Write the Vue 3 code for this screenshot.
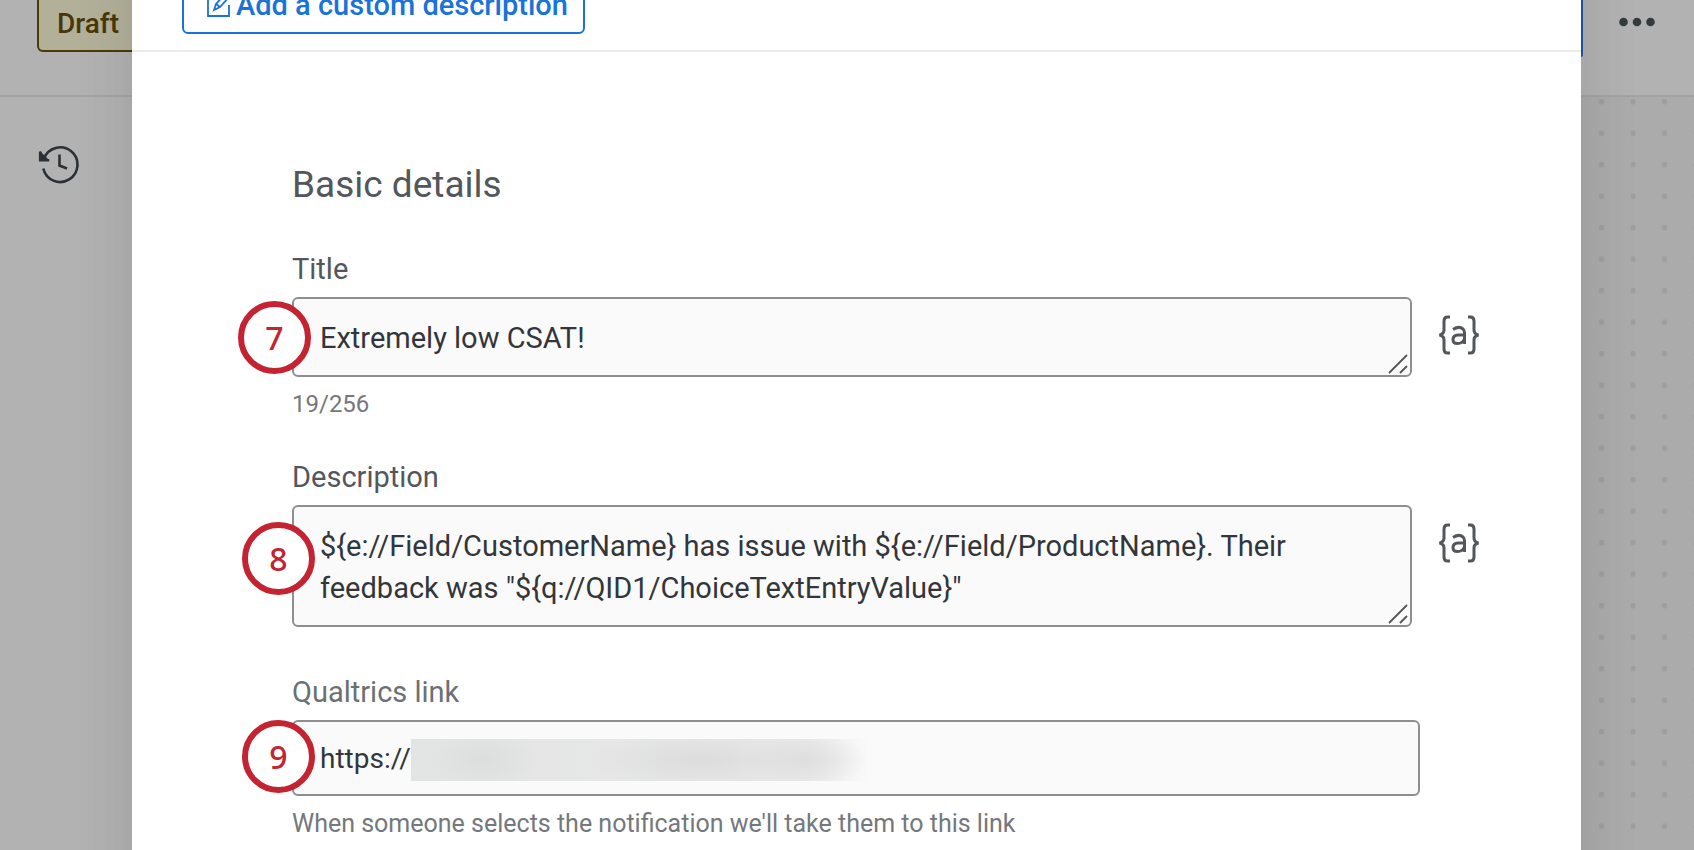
<script setup>
import { ref } from 'vue'

const title = ref('Extremely low CSAT!')
const description = ref(
  '${e://Field/CustomerName} has issue with ${e://Field/ProductName}. Their feedback was "${q://QID1/ChoiceTextEntryValue}"'
)
const link = ref('https://r')
</script>

<template>
  <div class="page">
    <div class="backdrop">
      <header class="topbar">
        <span class="status">Draft</span>
        <span class="publish"></span>
        <button class="more" type="button" aria-label="More options">
          <svg width="36" height="12" viewBox="0 0 36 12" fill="#353a3d">
            <circle cx="4.5" cy="6" r="4.3" />
            <circle cx="18" cy="6" r="4.3" />
            <circle cx="31.5" cy="6" r="4.3" />
          </svg>
        </button>
      </header>
      <div class="workspace">
        <nav class="rail">
          <button class="history" type="button" aria-label="Version history">
            <svg width="42" height="42" viewBox="0 0 42 42" fill="none" stroke="#2b3034" stroke-width="2.6">
              <path d="M6 15.5A17.3 17.3 0 1 1 5.3 25.500" />
              <path d="M2 8v9.5h9.5z" fill="#2b3034" stroke="none" />
              <path d="M2.2 8.5v8.7h9" />
              <path d="M21.5 11.5v11l7.5 3" />
            </svg>
          </button>
        </nav>
        <div class="canvas">
          <svg width="100%" height="100%" aria-hidden="true">
            <defs>
              <pattern id="dots" width="63" height="63" patternUnits="userSpaceOnUse" patternTransform="scale(.5)">
                <rect x="36" y="4" width="10" height="11" rx="3" fill="#9e9e9e" />
              </pattern>
            </defs>
            <rect width="100%" height="100%" fill="url(#dots)" />
          </svg>
        </div>
      </div>
    </div>

    <main class="modal" role="dialog" aria-label="Notification task">
      <div class="modal-head">
        <button class="custom" type="button">
          <svg width="26" height="28" viewBox="0 0 26 28" fill="none" stroke="#1a73d9" stroke-width="1.8">
            <path d="M13 4H2v21h21V14" />
            <path d="M8 19l2-6L20 2l4 3-10 11z" />
            <path d="M10 13l4 3M18 5l4 3" />
          </svg>
          <span>Add a custom description</span>
        </button>
      </div>

      <form class="form" @submit.prevent>
        <h2>Basic details</h2>

        <section class="group">
          <label for="title">Title</label>
          <div class="row">
            <div class="field">
              <textarea id="title" v-model="title" rows="1" spellcheck="false"></textarea>
              <svg class="grip" width="20" height="20" viewBox="0 0 20 20" stroke="#555" stroke-width="1.8">
                <path d="M1 19L19 1M12 19l7-7" />
              </svg>
              <span class="step step-title">7</span>
            </div>
            <button class="pipe" type="button" aria-label="Insert piped text">
              <svg width="42" height="40" viewBox="0 0 42 40" fill="none" stroke="#53575c" stroke-width="3">
                <path d="M12 2H9.500Q6 2 6 6v9q0 4-4.500 5Q6 21 6 25v9q0 4 3.500 4H12M30 2h2.500Q36 2 36 6v9q0 4 4.500 5Q36 21 36 25v9q0 4-3.500 4H30" />
                <path d="M15 14.500q6-4 10-.500 1.500 1.500 1.500 4V29" />
                <path d="M26.500 20H20q-5 .500-5 4.500 0 4 4.500 4 5 0 7-4.500" />
              </svg>
            </button>
          </div>
          <p class="hint counter">19/256</p>
        </section>

        <section class="group">
          <label for="description">Description</label>
          <div class="row">
            <div class="field">
              <textarea id="description" v-model="description" rows="2" spellcheck="false"></textarea>
              <svg class="grip" width="20" height="20" viewBox="0 0 20 20" stroke="#555" stroke-width="1.8">
                <path d="M1 19L19 1M12 19l7-7" />
              </svg>
              <span class="step step-description">8</span>
            </div>
            <button class="pipe" type="button" aria-label="Insert piped text">
              <svg width="42" height="40" viewBox="0 0 42 40" fill="none" stroke="#53575c" stroke-width="3">
                <path d="M12 2H9.500Q6 2 6 6v9q0 4-4.500 5Q6 21 6 25v9q0 4 3.500 4H12M30 2h2.500Q36 2 36 6v9q0 4 4.500 5Q36 21 36 25v9q0 4-3.500 4H30" />
                <path d="M15 14.500q6-4 10-.500 1.500 1.500 1.500 4V29" />
                <path d="M26.500 20H20q-5 .500-5 4.500 0 4 4.500 4 5 0 7-4.500" />
              </svg>
            </button>
          </div>
        </section>

        <section class="group link-group">
          <label for="link" class="muted">Qualtrics link</label>
          <div class="field">
            <input id="link" v-model="link" type="text" spellcheck="false" />
            <span class="redaction"></span>
            <span class="step step-link">9</span>
          </div>
          <p class="hint">When someone selects the notification we'll take them to this link</p>
        </section>
      </form>
    </main>
  </div>
</template>

<style>
body {
  margin: 0;
  background: #b2b2b2;
}
</style>

<style scoped>
* {
  box-sizing: border-box;
}
.page {
  position: relative;
  height: 100vh;
  overflow: hidden;
  font-family: Roboto, "Liberation Sans", sans-serif;
  font-size: 29px;
  color: #32363a;
}
button {
  font: inherit;
  padding: 0;
  border: 0;
  background: none;
}
svg {
  display: block;
}
.backdrop {
  height: 100%;
  display: flex;
  flex-direction: column;
  background: #b2b2b2;
}
.topbar {
  height: 97px;
  flex: none;
  display: flex;
  align-items: flex-start;
  padding: 0 39px 0 37px;
  border-bottom: 2px solid #a3a3a3;
}
.status {
  height: 52px;
  width: 130px;
  padding: 6px 0 0 18px;
  font-size: 28px;
  line-height: 36px;
  font-weight: 500;
  color: #4a3706;
  background: #b3b09a;
  border: 2px solid #4a3a08;
  border-top: 0;
  border-radius: 0 0 6px 6px;
}
.publish {
  width: 120px;
  height: 57px;
  margin-left: auto;
  background: #1b5a9e;
  border-radius: 0 0 2px 2px;
}
.more {
  margin: 16px 0 0 36px;
}
.workspace {
  flex: 1;
  display: flex;
  justify-content: space-between;
}
.rail {
  width: 132px;
  padding: 46px 0 0 38px;
}
.canvas {
  width: 113px;
  background: #ababab;
}
.modal {
  position: absolute;
  inset: -80px 113px -80px 132px;
  padding-top: 80px;
  background: #fff;
  box-shadow: 0 0 56px rgba(0, 0, 0, 0.12);
}
.modal-head {
  height: 52px;
  display: flex;
  align-items: flex-end;
  padding: 0 50px 16px;
  border-bottom: 2px solid #ebebeb;
}
.custom {
  display: flex;
  align-items: center;
  gap: 4px;
  height: 58px;
  padding: 0 15px 0 22px;
  border: 2px solid #1a73d9;
  border-radius: 6px;
  color: #1a73d9;
  font-weight: 500;
}
.form {
  padding: 111px 101px 0 160px;
}
h2 {
  margin: 0 0 44px;
  font-size: 37px;
  line-height: 44px;
  font-weight: 400;
  color: #53575c;
}
.group {
  margin-bottom: 47px;
}
label {
  display: block;
  margin-bottom: 10px;
  line-height: 36px;
  color: #53575c;
}
.muted {
  color: #6c7074;
}
.row {
  display: flex;
  align-items: flex-start;
  gap: 26px;
}
.field {
  position: relative;
  flex: 1;
}
textarea,
input {
  display: block;
  width: 100%;
  padding: 18px 26px 16px;
  font: inherit;
  line-height: 42px;
  color: #32363a;
  background: #fafafa;
  border: 2px solid #8e8e8e;
  border-radius: 6px;
  outline: 0;
  resize: none;
  overflow: hidden;
}
input {
  height: 76px;
  padding: 0 26px;
  font-size: 28px;
}
.link-group {
  margin-right: 60px;
}
.grip {
  position: absolute;
  right: 4px;
  bottom: 3px;
}
.pipe {
  margin-top: 18px;
}
.hint {
  margin: 12px 0 0;
  font-size: 25px;
  line-height: 32px;
  color: #74787c;
}
.counter {
  margin: 11px 0 -8px;
  font-size: 24px;
}
.redaction {
  position: absolute;
  left: 119px;
  top: 19px;
  width: 456px;
  height: 42px;
  background:
    radial-gradient(ellipse 56px 32px at 72px 50%, #dcdddd, transparent),
    radial-gradient(ellipse 110px 30px at 290px 50%, #dcdcdc, transparent),
    radial-gradient(ellipse 60px 30px at 395px 50%, #dedede, transparent),
    linear-gradient(90deg, #e3e4e4, #e9e9e9 84%, #f9f9f9);
}
.step {
  position: absolute;
  width: 73px;
  height: 73px;
  border: 6px solid #c42332;
  border-radius: 50%;
  background: #fff;
  color: #c42332;
  font-family: "Noto Sans", "Open Sans", sans-serif;
  font-size: 32px;
  font-weight: 500;
  line-height: 61px;
  text-align: center;
}
.step-title {
  left: -54px;
  top: 4px;
}
.step-description {
  left: -50px;
  top: 17px;
}
.step-link {
  left: -50px;
  top: 0;
}
</style>
